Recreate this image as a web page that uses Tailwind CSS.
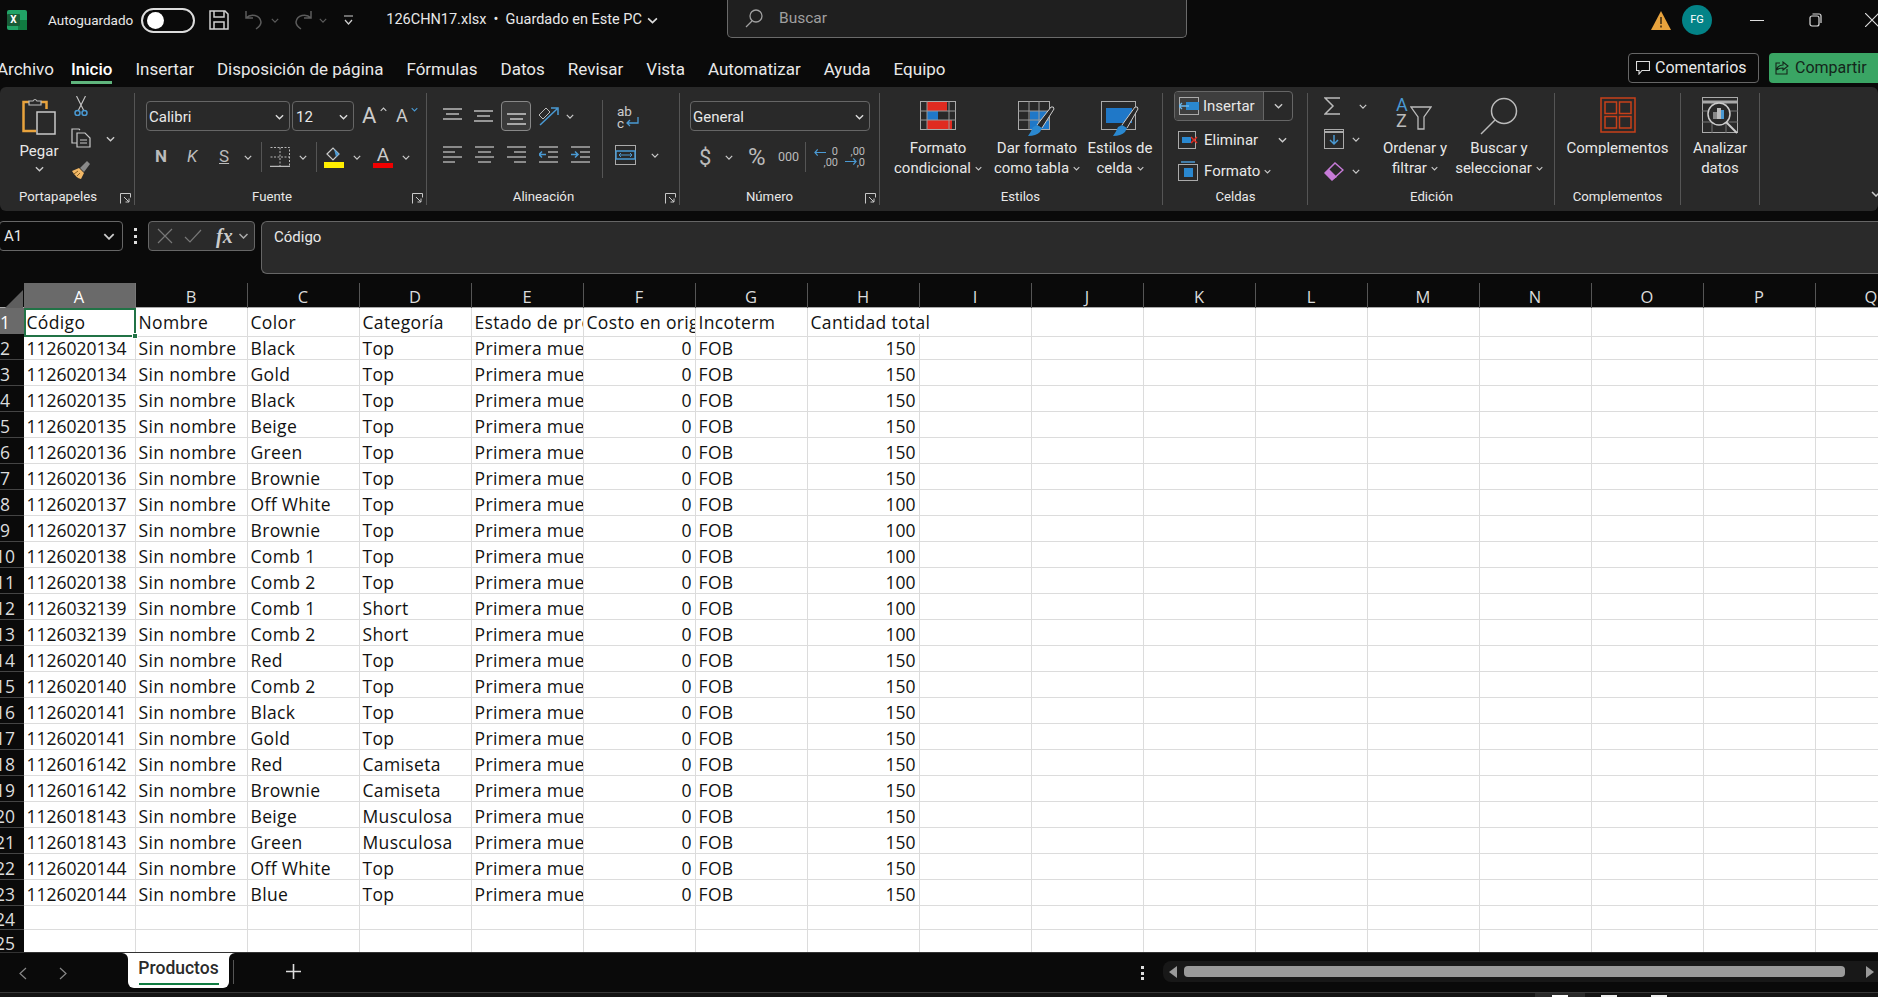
<!DOCTYPE html>
<html lang="en">
<head>
  <meta charset="UTF-8">
  <title>126CHN17.xlsx - Excel</title>
  <script src="https://cdn.jsdelivr.net/npm/@tailwindcss/browser@4"></script>
</head>
<body class="w-[1878px] h-[997px] overflow-hidden bg-[#0a0a0a] text-[#e8e8e8] font-['Roboto',sans-serif] text-[15px] flex flex-col">
  <!-- shared glyphs -->
  <svg class="hidden">
    <symbol id="c" viewBox="0 0 10 6"><path d="M1 1l4 4 4-4" fill="none" stroke="currentColor" stroke-width="1.5"/></symbol>
    <symbol id="launch" viewBox="0 0 11 11"><path d="M.5 10.5V.5h10v4M4 4l5 5M9 5.5V9H5.5" fill="none" stroke="#c8c8c8" stroke-width="1"/></symbol>
  </svg>

  <!-- title bar -->
  <div class="h-[40px] shrink-0 flex items-start">
    <div class="w-[727px] shrink-0 h-full flex items-center">
      <div class="ml-[7px] w-[20px] h-[20px] relative rounded-[2px] bg-[#21a366]">
        <div class="absolute right-0 bottom-0 w-[9px] h-[10px] bg-[#107c41]"></div>
        <div class="absolute left-0 top-[4px] w-[13px] h-[12px] rounded-[1px] bg-[#185c37] text-white text-[10px] leading-[12px] font-bold text-center">X</div>
      </div>
      <span class="ml-[21px] text-[13.500px]">Autoguardado</span>
      <div class="ml-[8px] w-[54px] h-[25px] border-2 border-[#dcdcdc] rounded-full flex items-center pl-[4px]"><div class="w-[17px] h-[17px] rounded-full bg-white"></div></div>
      <svg class="ml-[14px] w-[20px] h-[20px]" viewBox="0 0 20 20" fill="none" stroke="#d0d0d0" stroke-width="1.500"><path d="M1 1h15l3 3v15H1z"/><path d="M5 1v6h10V1M5 19v-7h10v7"/></svg>
      <svg class="ml-[16px] w-[19px] h-[20px]" viewBox="0 0 19 20" fill="none" stroke="#5c5c5c" stroke-width="1.500"><path d="M1 1v7h7M1 8c5-5 14-3 15 4 0 3-2 5-5 7"/></svg>
      <svg class="ml-[7px] w-[8px] h-[5px] text-[#5c5c5c]"><use href="#c"/></svg>
      <svg class="ml-[14px] w-[19px] h-[20px]" viewBox="0 0 19 20" fill="none" stroke="#5c5c5c" stroke-width="1.500"><path d="M18 1v7h-7M18 8C13 3 4 5 3 12c0 3 2 5 5 7"/></svg>
      <svg class="ml-[7px] w-[8px] h-[5px] text-[#5c5c5c]"><use href="#c"/></svg>
      <svg class="ml-[17px] w-[9px] h-[10px]" viewBox="0 0 9 10" fill="none" stroke="#d0d0d0" stroke-width="1.200"><path d="M0 1h9M1 5l3.500 4L8 5"/></svg>
      <span class="ml-[33px] text-[14.500px]">126CHN17.xlsx &nbsp;•&nbsp; Guardado en Este PC</span>
      <svg class="ml-[5px] w-[11px] h-[7px] text-[#ddd]"><use href="#c"/></svg>
    </div>
    <div class="w-[460px] h-[38px] shrink-0 rounded-b-[5px] border border-t-0 border-[#6a6a6a] bg-[#1f1f1f] flex items-center">
      <svg class="ml-[17px] w-[18px] h-[19px]" viewBox="0 0 18 19" fill="none" stroke="#a0a0a0" stroke-width="1.300"><circle cx="11" cy="7" r="6"/><path d="M7 12l-6 6"/></svg>
      <span class="ml-[16px] text-[#a0a0a0] text-[15.500px]">Buscar</span>
    </div>
    <div class="flex-1 h-full flex items-center">
      <svg class="ml-[464px] w-[20px] h-[19px]" viewBox="0 0 20 19"><path d="M10 0l10 19H0z" fill="#e8a33d"/><path d="M10 6v7M10 14.500v2" stroke="#3a2a10" stroke-width="1.500"/></svg>
      <div class="ml-[11px] w-[30px] h-[30px] rounded-full bg-[#038387] flex items-center justify-center text-[11px] text-white">FG</div>
      <div class="ml-[38px] w-[14px] h-px bg-[#ddd]"></div>
      <svg class="ml-[45px] w-[13px] h-[14px]" viewBox="0 0 13 14" fill="none" stroke="#ddd" stroke-width="1.200"><rect x="1" y="3" width="9" height="10" rx="2"/><path d="M3.500 1H10q2 0 2 2v7"/></svg>
      <svg class="ml-[43px] w-[14px] h-[14px]" viewBox="0 0 14 14" stroke="#ddd" stroke-width="1.200"><path d="M0 0l14 14M14 0L0 14"/></svg>
    </div>
  </div>

  <!-- ribbon tabs -->
  <div class="h-[47px] shrink-0 flex items-start">
    <div class="flex gap-[23px] ml-[-3px] pt-[17px] text-[17px] leading-[24px]">
      <span class="mr-[-6px]">Archivo</span>
      <span class="font-medium text-white border-b-[3px] border-[#5fb57d] h-[27px]">Inicio</span>
      <span>Insertar</span>
      <span>Disposición de página</span>
      <span>Fórmulas</span>
      <span>Datos</span>
      <span>Revisar</span>
      <span>Vista</span>
      <span>Automatizar</span>
      <span>Ayuda</span>
      <span>Equipo</span>
    </div>
    <div class="ml-auto flex gap-[10px] pt-[13px]">
      <div class="w-[131px] h-[30px] rounded-[4px] border border-[#666] flex items-center pl-[7px] gap-[5px] text-[16px]">
        <svg class="w-[14px] h-[14px]" viewBox="0 0 14 14" fill="none" stroke="#ddd" stroke-width="1.100"><path d="M.5.500h13v9H6l-3 3.500V9.500H.5z"/></svg>Comentarios
      </div>
      <div class="w-[109px] h-[30px] rounded-l-[4px] bg-[#3aa564] flex items-center pl-[6px] gap-[6px] text-[16px] text-[#14261b]">
        <svg class="w-[14px] h-[14px]" viewBox="0 0 14 14" fill="none" stroke="#14261b" stroke-width="1.100"><path d="M5 2H1v11h11V8M1 9q2-5 7-5V1l5 4-5 4V7q-4 0-7 2"/></svg>Compartir
      </div>
    </div>
  </div>

  <!-- ribbon -->
  <div class="h-[124px] shrink-0 bg-[#292929] rounded-[6px] py-[6px] flex relative text-[#e8e8e8]">

    <!-- Portapapeles -->
    <div class="w-[135px] h-[112px] shrink-0 border-r border-[#555] flex flex-col relative">
      <div class="h-[96px] flex">
        <div class="ml-[19px] w-[40px] flex flex-col items-center pt-[4px]">
          <svg class="w-[34px] h-[38px]" viewBox="0 0 34 38"><path d="M7 5H1.500v29H14" fill="none" stroke="#e8a33d" stroke-width="2.500"/><path d="M19 5h5.500v7" fill="none" stroke="#e8a33d" stroke-width="2.500"/><path d="M7 8V4h4q2-3 4 0h4v4z" fill="#292929" stroke="#bbb" stroke-width="1.200"/><rect x="15" y="15" width="18" height="22" fill="#292929" stroke="#c8c8c8" stroke-width="1.500"/></svg>
          <span class="mt-[8px] leading-[17px]">Pegar</span>
          <svg class="mt-[6px] w-[9px] h-[6px] text-[#ccc]"><use href="#c"/></svg>
        </div>
        <div class="ml-[11px] w-[22px] flex flex-col items-center pt-[3px]">
          <svg class="w-[14px] h-[20px]" viewBox="0 0 14 20" fill="none"><path d="M2.500 0l7 14M11.500 0l-7 14" stroke="#c8c8c8" stroke-width="1.100"/><circle cx="3.500" cy="17" r="2.500" stroke="#4a9ad4" stroke-width="1.500"/><circle cx="10.500" cy="17" r="2.500" stroke="#4a9ad4" stroke-width="1.500"/></svg>
          <svg class="mt-[12px] w-[20px] h-[20px]" viewBox="0 0 20 20" fill="none" stroke="#c8c8c8" stroke-width="1.200"><path d="M6 15H1V1h7l1 1M6 5h8l5 5v9H6z"/><path d="M9 12h7M9 15h7" stroke-width="1"/></svg>
          <svg class="mt-[12px] w-[20px] h-[20px]" viewBox="0 0 20 20"><path d="M1 11l7-3 5 5-3 6q-5-1-9-8z" fill="#f2b866"/><path d="M9 8l7-7 3 3-6 8" fill="#8a8a8a"/><path d="M3 14l4-3M6 16l3-3" stroke="#8a6020" stroke-width="1"/></svg>
        </div>
        <svg class="ml-[14px] mt-[43px] w-[9px] h-[6px] text-[#ccc]"><use href="#c"/></svg>
      </div>
      <div class="h-[16px] mb-[-4px] text-center text-[13.200px] leading-[16px] pr-[18px]">Portapapeles</div>
      <svg class="absolute right-[3px] bottom-[1px] w-[11px] h-[11px]"><use href="#launch"/></svg>
    </div>

    <!-- Fuente -->
    <div class="w-[292px] h-[112px] shrink-0 border-r border-[#555] flex flex-col relative">
      <div class="h-[96px] pt-[8px]">
        <div class="flex items-center pl-[11px]">
          <div class="w-[144px] h-[30px] border border-[#666] rounded-[4px] flex items-center justify-between pl-[2px] pr-[5px] pt-[2px]">Calibri<svg class="w-[9px] h-[6px] text-[#ddd]"><use href="#c"/></svg></div>
          <div class="ml-[2px] w-[62px] h-[30px] border border-[#666] rounded-[4px] flex items-center justify-between pl-[3px] pr-[5px] pt-[2px]">12<svg class="w-[9px] h-[6px] text-[#ddd]"><use href="#c"/></svg></div>
          <span class="ml-[8px] w-[18px] text-[22px] leading-[22px] text-[#ccc]">A</span><svg class="w-[7px] h-[5px] mb-[14px] rotate-180 text-[#ccc]"><use href="#c"/></svg>
          <span class="ml-[9px] w-[15px] text-[18px] leading-[20px] text-[#ccc]">A</span><svg class="w-[7px] h-[5px] mb-[14px] text-[#4a9ad4]"><use href="#c"/></svg>
        </div>
        <div class="flex items-center h-[30px] mt-[11px]">
          <span class="ml-[20px] w-[14px] font-bold text-[#bbb] text-[17px]">N</span>
          <span class="ml-[18px] w-[10px] italic text-[#bbb] text-[17px]">K</span>
          <span class="ml-[22px] w-[10px] underline text-[#bbb] text-[17px]">S</span>
          <svg class="ml-[15px] w-[8px] h-[5px] text-[#ccc]"><use href="#c"/></svg>
          <div class="ml-[9px] w-px h-[30px] bg-[#555]"></div>
          <svg class="ml-[8px] w-[20px] h-[20px]" viewBox="0 0 20 20" fill="none" stroke="#b8b8b8"><path d="M.5.500h19v19H.5M10 .5v19M.5 10h19" stroke-dasharray="2 1.500"/><path d="M0 19.500h20" stroke-width="1.500"/></svg>
          <svg class="ml-[9px] w-[8px] h-[5px] text-[#ccc]"><use href="#c"/></svg>
          <div class="ml-[9px] w-px h-[30px] bg-[#555]"></div>
          <svg class="ml-[7px] w-[20px] h-[22px]" viewBox="0 0 20 22"><path d="M3 8l6-6 6 6-6 6z" fill="none" stroke="#ccc" stroke-width="1.200"/><path d="M10 3l5 5-3 3z" fill="#4a9ad4"/><rect y="16" width="20" height="6" fill="#ffee00"/></svg>
          <svg class="ml-[9px] w-[8px] h-[5px] text-[#ccc]"><use href="#c"/></svg>
          <div class="ml-[12px] w-[20px] flex flex-col items-center"><span class="text-[19px] leading-[17px] text-[#ccc]">A</span><div class="w-[20px] h-[5px] bg-[#f00000]"></div></div>
          <svg class="ml-[9px] w-[8px] h-[5px] text-[#ccc]"><use href="#c"/></svg>
        </div>
      </div>
      <div class="h-[16px] mb-[-4px] text-center text-[13.200px] leading-[16px] pr-[17px]">Fuente</div>
      <svg class="absolute right-[3px] bottom-[1px] w-[11px] h-[11px]"><use href="#launch"/></svg>
    </div>

    <!-- Alineación -->
    <div class="w-[253px] h-[112px] shrink-0 border-r border-[#555] flex flex-col relative">
      <div class="h-[96px] flex">
        <div class="w-[176px] border-r border-[#555] h-[78px] mt-[7px] pl-[16px]">
          <div class="flex items-center h-[30px] mt-[1px]">
            <svg class="w-[19px] h-[16px]" viewBox="0 0 19 16" stroke="#bbb" stroke-width="1.500"><path d="M0 1h19M3 6h13M0 11h19"/></svg>
            <svg class="ml-[12px] w-[19px] h-[16px]" viewBox="0 0 19 16" stroke="#bbb" stroke-width="1.500"><path d="M0 3h19M3 8h13M0 13h19"/></svg>
            <div class="ml-[8px] w-[30px] h-[30px] border border-[#888] bg-[#3a3a3a] rounded-[4px] flex items-center justify-center"><svg class="w-[19px] h-[16px] mt-[4px]" viewBox="0 0 19 16" stroke="#ccc" stroke-width="1.500"><path d="M0 4h19M3 9h13M0 14h19"/></svg></div>
            <svg class="ml-[6px] w-[22px] h-[20px]" viewBox="0 0 22 20" fill="none"><path d="M2 9l7-7 4 4-7 7z" stroke="#bbb" stroke-width="1"/><path d="M3 19L20 3M14 2h7v7" stroke="#4a9ad4" stroke-width="1.500"/></svg>
            <svg class="ml-[7px] w-[8px] h-[5px] text-[#ccc]"><use href="#c"/></svg>
          </div>
          <div class="flex items-center h-[30px] mt-[9px] gap-[13px]">
            <svg class="w-[19px] h-[18px]" viewBox="0 0 19 18" stroke="#aaa" stroke-width="1.500"><path d="M0 1h19M0 6h12M0 11h19M0 16h12"/></svg>
            <svg class="w-[19px] h-[18px]" viewBox="0 0 19 18" stroke="#aaa" stroke-width="1.500"><path d="M0 1h19M3 6h13M0 11h19M3 16h13"/></svg>
            <svg class="w-[19px] h-[18px]" viewBox="0 0 19 18" stroke="#aaa" stroke-width="1.500"><path d="M0 1h19M7 6h12M0 11h19M7 16h12"/></svg>
            <svg class="w-[19px] h-[18px]" viewBox="0 0 19 18" fill="none" stroke="#aaa" stroke-width="1.500"><path d="M0 1h19M9 6h10M9 11h10M0 16h19"/><path d="M7 8.500H0M3 5.500l-3 3 3 3" stroke="#4a9ad4"/></svg>
            <svg class="w-[19px] h-[18px]" viewBox="0 0 19 18" fill="none" stroke="#aaa" stroke-width="1.500"><path d="M0 1h19M9 6h10M9 11h10M0 16h19"/><path d="M0 8.500h7M4 5.500l3 3-3 3" stroke="#4a9ad4"/></svg>
          </div>
        </div>
        <div class="pl-[14px] pt-[12px]">
          <div class="relative w-[24px] h-[26px] text-[13.500px] leading-[12px] text-[#ccc]">ab<br>c<svg class="absolute left-[9px] top-[12px] w-[13px] h-[11px]" viewBox="0 0 13 11" fill="none" stroke="#4a9ad4" stroke-width="1.300"><path d="M12 0v6H1M4 3L1 6l3 3"/></svg></div>
          <div class="flex items-center mt-[9px] h-[30px] ml-[-2px]">
            <svg class="w-[21px] h-[20px]" viewBox="0 0 21 20" fill="none"><rect x=".5" y=".5" width="20" height="19" stroke="#aaa"/><rect x="1" y="6" width="19" height="8" stroke="#4a9ad4" stroke-width="1.500"/><path d="M4 10h13M6 8l-2 2 2 2M15 8l2 2-2 2" stroke="#4a9ad4"/></svg>
            <svg class="ml-[15px] w-[8px] h-[5px] text-[#ccc]"><use href="#c"/></svg>
          </div>
        </div>
      </div>
      <div class="h-[16px] mb-[-4px] text-center text-[13.200px] leading-[16px] pr-[19px]">Alineación</div>
      <svg class="absolute right-[3px] bottom-[1px] w-[11px] h-[11px]"><use href="#launch"/></svg>
    </div>

    <!-- Número -->
    <div class="w-[200px] h-[112px] shrink-0 border-r border-[#555] flex flex-col relative">
      <div class="h-[96px] pt-[8px]">
        <div class="ml-[10px] w-[180px] h-[30px] border border-[#666] rounded-[4px] flex items-center justify-between pl-[2px] pr-[5px] pt-[2px]">General<svg class="w-[9px] h-[6px] text-[#ddd]"><use href="#c"/></svg></div>
        <div class="flex items-center h-[30px] mt-[11px]">
          <span class="ml-[19px] w-[12px] text-[22px] text-[#bbb]">$</span>
          <svg class="ml-[14px] w-[8px] h-[5px] text-[#ccc]"><use href="#c"/></svg>
          <span class="ml-[15px] w-[22px] text-[24px] text-[#bbb]">%</span>
          <span class="ml-[8px] w-[20px] text-[12.500px] text-[#bbb]">000</span>
          <div class="ml-[7px] w-px h-[30px] bg-[#555]"></div>
          <div class="ml-[6px] w-[26px] h-[24px] relative text-[11px] leading-[11px] text-[#bbb] text-right pt-[1px]">0<br>,00<svg class="absolute left-[2px] top-[3px] w-[12px] h-[9px]" viewBox="0 0 13 9" fill="none" stroke="#4a9ad4" stroke-width="1.300"><path d="M13 4.500H1M4 1L1 4.500 4 8"/></svg></div>
          <div class="ml-[7px] w-[20px] h-[24px] relative text-[11px] leading-[11px] text-[#bbb] text-right pt-[1px]">,00<br>,0<svg class="absolute left-0 top-[12px] w-[12px] h-[9px]" viewBox="0 0 13 9" fill="none" stroke="#4a9ad4" stroke-width="1.300"><path d="M0 4.500h12M9 1l3 3.500L9 8"/></svg></div>
        </div>
      </div>
      <div class="h-[16px] mb-[-4px] text-center text-[13.200px] leading-[16px] pr-[20px]">Número</div>
      <svg class="absolute right-[3px] bottom-[1px] w-[11px] h-[11px]"><use href="#launch"/></svg>
    </div>

    <!-- Estilos -->
    <div class="w-[283px] h-[112px] shrink-0 border-r border-[#555] flex flex-col">
      <div class="h-[96px] flex pt-[8px] leading-[20px] text-center">
        <div class="ml-[-2px] w-[120px] shrink-0 flex flex-col items-center">
          <svg class="w-[36px] h-[35px]" viewBox="0 0 36 35" fill="none"><path d="M7 1h20v9H7zM7 19h25v9H7z" fill="#e02b20"/><path d="M7 10h11v9H7z" fill="#1f78c8"/><rect x=".5" y=".5" width="35" height="28" stroke="#aaa"/><path d="M7 0v29M29 0v29M0 10h36M0 19h36" stroke="#999"/></svg>
          <span class="mt-[2px]">Formato</span>
          <span class="whitespace-nowrap flex items-center gap-[4px]">condicional<svg class="w-[7px] h-[5px] text-[#ccc]"><use href="#c"/></svg></span>
        </div>
        <div class="ml-[-11px] w-[100px] shrink-0 flex flex-col items-center">
          <svg class="w-[38px] h-[35px]" viewBox="0 0 38 35" fill="none"><path d="M12 10h20v18H12z" fill="#1f78c8"/><rect x=".5" y=".5" width="31" height="28" stroke="#aaa"/><path d="M11 0v29M21 0v29M0 10h32M0 19h32" stroke="#999"/><path d="M19 24L33 6q3-1 3 2L24 27" fill="#292929" stroke="#ccc"/><path d="M10 35q8 0 12-4l2-4-5-3-4 2q-2 5-5 9z" fill="#2a88d0"/></svg>
          <span class="mt-[2px] whitespace-nowrap">Dar formato</span>
          <span class="whitespace-nowrap flex items-center gap-[4px]">como tabla<svg class="w-[7px] h-[5px] text-[#ccc]"><use href="#c"/></svg></span>
        </div>
        <div class="ml-[-17px] w-[100px] shrink-0 flex flex-col items-center">
          <svg class="w-[38px] h-[35px]" viewBox="0 0 38 35" fill="none"><rect x=".5" y=".5" width="34" height="28" stroke="#aaa"/><path d="M5 7h26v15H5z" fill="#1f78c8"/><path d="M21 24L34 6q3-1 3 2L26 27" fill="#292929" stroke="#ccc"/><path d="M12 35q8 0 12-4l2-4-5-3-4 2q-2 5-5 9z" fill="#2a88d0"/></svg>
          <span class="mt-[2px] whitespace-nowrap">Estilos de</span>
          <span class="whitespace-nowrap flex items-center gap-[4px]">celda<svg class="w-[7px] h-[5px] text-[#ccc]"><use href="#c"/></svg></span>
        </div>
      </div>
      <div class="h-[16px] mb-[-5px] text-center text-[13.200px] leading-[16px] pr-[1px]">Estilos</div>
    </div>

    <!-- Celdas -->
    <div class="w-[145px] h-[112px] shrink-0 border-r border-[#555] flex flex-col">
      <div class="h-[96px] pl-[11px]">
        <div class="w-[119px] h-[30px] mt-[-2px] border border-[#666] rounded-[4px] flex items-center overflow-hidden">
          <div class="w-[89px] h-full bg-[#3e3e3e] flex items-center pl-[4px] gap-[4px] border-r border-[#666]">
            <svg class="w-[20px] h-[18px]" viewBox="0 0 20 18" fill="none"><rect x=".5" y=".5" width="19" height="17" stroke="#aaa"/><path d="M7 5h13v8H7z" fill="#2a88d0"/><path d="M10 9H0M3 6L0 9l3 3" stroke="#6ab8ee" stroke-width="1.300"/></svg>Insertar
          </div>
          <svg class="ml-[10px] w-[9px] h-[6px] text-[#ccc]"><use href="#c"/></svg>
        </div>
        <div class="h-[32px] flex items-center pl-[4px] gap-[6px] mt-[3px]">
          <svg class="w-[20px] h-[18px]" viewBox="0 0 20 18" fill="none"><rect x=".5" y=".5" width="17" height="17" stroke="#aaa"/><path d="M4 6h9v6H4z" fill="#2a88d0"/><path d="M13 6l6 6M19 6l-6 6" stroke="#e02b20" stroke-width="1.500"/></svg>Eliminar
          <svg class="ml-[14px] w-[9px] h-[6px] text-[#ccc]"><use href="#c"/></svg>
        </div>
        <div class="h-[32px] mt-[-1px] flex items-center pl-[4px] gap-[6px]">
          <svg class="w-[20px] h-[20px]" viewBox="0 0 20 20" fill="none"><rect x=".5" y="3.500" width="19" height="16" stroke="#aaa"/><path d="M6 7h9v9H6z" fill="#2a88d0"/><path d="M3 1h14" stroke="#4a9ad4" stroke-width="1.500"/></svg><span class="flex items-center gap-[4px]">Formato<svg class="w-[7px] h-[5px] text-[#ccc]"><use href="#c"/></svg></span>
        </div>
      </div>
      <div class="h-[16px] mb-[-5px] text-center text-[13.200px] leading-[16px] pl-[1px]">Celdas</div>
    </div>

    <!-- Edición -->
    <div class="w-[247px] h-[112px] shrink-0 border-r border-[#555] flex flex-col">
      <div class="h-[96px] flex">
        <div class="w-[65px] pl-[16px] pt-[4px] shrink-0">
          <div class="h-[18px] flex items-center"><svg class="w-[17px] h-[18px]" viewBox="0 0 17 18" fill="none" stroke="#bbb" stroke-width="1.500"><path d="M16 1H1l8 8-8 8h15"/></svg><svg class="ml-[18px] w-[8px] h-[5px] text-[#ccc]"><use href="#c"/></svg></div>
          <div class="h-[20px] mt-[14px] flex items-center"><svg class="w-[20px] h-[20px]" viewBox="0 0 20 20" fill="none"><rect x=".5" y=".5" width="19" height="19" stroke="#aaa"/><path d="M0 3h20" stroke="#aaa" stroke-width="2"/><path d="M10 6v9M6 11l4 4 4-4" stroke="#4a9ad4" stroke-width="1.500"/></svg><svg class="ml-[8px] w-[8px] h-[5px] text-[#ccc]"><use href="#c"/></svg></div>
          <div class="h-[20px] mt-[12px] flex items-center"><svg class="w-[20px] h-[20px]" viewBox="0 0 20 20" fill="none"><path d="M1 12L11 2l8 7L8 19z" stroke="#c77bd8" stroke-width="1.500"/><path d="M1 12l4-4 8 8-5 3z" fill="#c77bd8"/></svg><svg class="ml-[8px] w-[8px] h-[5px] text-[#ccc]"><use href="#c"/></svg></div>
        </div>
        <div class="w-[84px] shrink-0 flex flex-col items-center pt-[4px] leading-[20px]">
          <div class="relative w-[36px] h-[37px] ml-[-2px] text-[18px] leading-[16px]"><span class="text-[#4a9ad4]">A</span><br><span class="text-[#bbb]">Z</span><svg class="absolute left-[14px] top-[9px] w-[22px] h-[24px]" viewBox="0 0 22 24" fill="none" stroke="#bbb" stroke-width="1.300"><path d="M1 1h20l-7 10v12h-6V11z"/></svg></div>
          <span class="mt-[4px] whitespace-nowrap">Ordenar y</span>
          <span class="whitespace-nowrap flex items-center gap-[4px]">filtrar<svg class="w-[7px] h-[5px] text-[#ccc]"><use href="#c"/></svg></span>
        </div>
        <div class="w-[84px] shrink-0 flex flex-col items-center pt-[4px] leading-[20px]">
          <svg class="w-[38px] h-[38px]" viewBox="0 0 38 38" fill="none" stroke="#bbb" stroke-width="1.500"><circle cx="24" cy="14" r="12.500"/><path d="M15 23L1 37"/></svg>
          <span class="mt-[3px] whitespace-nowrap">Buscar y</span>
          <span class="whitespace-nowrap flex items-center gap-[4px]">seleccionar<svg class="w-[7px] h-[5px] text-[#ccc]"><use href="#c"/></svg></span>
        </div>
      </div>
      <div class="h-[16px] mb-[-5px] text-center text-[13.200px] leading-[16px] pl-[1px]">Edición</div>
    </div>

    <!-- Complementos -->
    <div class="w-[126px] h-[112px] shrink-0 border-r border-[#555] flex flex-col">
      <div class="h-[96px] flex flex-col items-center pt-[4px]">
        <svg class="w-[36px] h-[36px]" viewBox="0 0 36 36" fill="none" stroke="#c8401a" stroke-width="1.500"><rect x="1" y="1" width="34" height="34"/><rect x="5" y="5" width="11.500" height="11.500"/><rect x="19.500" y="5" width="11.500" height="11.500"/><rect x="5" y="19.500" width="11.500" height="11.500"/><rect x="19.500" y="19.500" width="11.500" height="11.500"/></svg>
        <span class="mt-[5px] leading-[20px]">Complementos</span>
      </div>
      <div class="h-[16px] mb-[-5px] text-center text-[13.200px] leading-[16px]">Complementos</div>
    </div>

    <!-- Analizar datos -->
    <div class="w-[79px] h-[112px] shrink-0 border-r border-[#555] flex flex-col items-center pt-[4px] leading-[20px]">
      <svg class="w-[36px] h-[37px]" viewBox="0 0 36 37" fill="none"><rect x=".5" y=".5" width="35" height="35" stroke="#aaa"/><path d="M0 5h36" stroke="#aaa" stroke-width="3"/><path d="M0 14h36M0 25h36M10 6v30M24 6v30" stroke="#777"/><circle cx="17" cy="17" r="11" fill="#292929" stroke="#ccc" stroke-width="1.500"/><path d="M24 25l11 11" stroke="#ccc" stroke-width="2"/><path d="M11 15h4v7h-4z" fill="#888"/><path d="M15 11h4v11h-4z" fill="#bbb"/><path d="M19 13h3v9h-3z" fill="#4a9ad4"/></svg>
      <span class="mt-[4px]">Analizar</span>
      <span>datos</span>
    </div>
    <svg class="ml-auto mt-[98px] mr-[-3px] w-[10px] h-[6px] text-[#ccc]"><use href="#c"/></svg>
  </div>

  <!-- formula bar -->
  <div class="h-[72px] shrink-0 pt-[10px] flex items-start">
    <div class="w-[124px] h-[30px] ml-[-1px] border border-[#666] rounded-[4px] flex items-center justify-between pl-[4px] pr-[7px]">A1<svg class="w-[12px] h-[7px] text-[#ccc]"><use href="#c"/></svg></div>
    <div class="ml-[11px] w-[3px] h-[16px] mt-[7px] flex flex-col justify-between"><i class="h-[3px] bg-[#ddd]"></i><i class="h-[3px] bg-[#ddd]"></i><i class="h-[3px] bg-[#ddd]"></i></div>
    <div class="ml-[11px] w-[107px] h-[30px] border border-[#666] rounded-[4px] bg-[#2a2a2a] flex items-center pl-[8px]">
      <svg class="w-[16px] h-[16px]" viewBox="0 0 16 16" stroke="#777" stroke-width="1.200"><path d="M1 1l14 14M15 1L1 15"/></svg>
      <svg class="ml-[11px] w-[18px] h-[14px]" viewBox="0 0 18 14" fill="none" stroke="#777" stroke-width="1.200"><path d="M1 8l5 5L17 1"/></svg>
      <span class="ml-[14px] font-['Liberation_Serif',serif] italic font-bold text-[20px] leading-[20px] text-[#ccc]">fx</span>
      <svg class="ml-[5px] w-[11px] h-[6px] text-[#aaa]"><use href="#c"/></svg>
    </div>
    <div class="ml-[6px] flex-1 h-[53px] border border-[#666] border-r-0 rounded-l-[6px] bg-[#2a2a2a] pl-[12px] pt-[5px] leading-[20px]">Código</div>
  </div>

  <!-- column headers -->
  <div id="colHead" class="h-[25px] shrink-0 grid grid-cols-[23.5px_repeat(17,112px)] border-b border-[#aaa] font-['Open_Sans',sans-serif] text-[16.500px] text-[#dcdcdc]">
    <div class="flex items-end justify-end pr-[1px] pb-[1px]"><svg class="w-[19px] h-[19px]" viewBox="0 0 19 19"><path d="M19 0v19H0z" fill="#5e5e5e"/></svg></div>
  </div>

  <!-- cells -->
  <div id="sheet" class="h-[644px] shrink-0 overflow-hidden bg-white text-[#111] font-['Open_Sans',sans-serif] text-[17.500px]"></div>

  <!-- sheet tabs -->
  <div class="h-[40px] shrink-0 border-t border-[#333] flex items-start relative">
    <svg class="ml-[19px] mt-[14px] w-[8px] h-[13px]" viewBox="0 0 8 13" fill="none" stroke="#888" stroke-width="1.200"><path d="M7 1L1 6.500 7 12"/></svg>
    <svg class="ml-[32px] mt-[14px] w-[8px] h-[13px]" viewBox="0 0 8 13" fill="none" stroke="#888" stroke-width="1.200"><path d="M1 1l6 5.500L1 12"/></svg>
    <div class="relative ml-[61px] w-[101px] h-[35px] bg-white rounded-b-[6px] flex flex-col items-center text-[#2a2a2a] font-medium text-[17.500px]">
      <div class="absolute left-[-6px] top-0 w-[6px] h-[6px] bg-white"><div class="w-full h-full bg-[#0a0a0a] rounded-tr-[6px]"></div></div>
      <div class="absolute right-[-6px] top-0 w-[6px] h-[6px] bg-white"><div class="w-full h-full bg-[#0a0a0a] rounded-tl-[6px]"></div></div>
      <span class="leading-[30px]">Productos</span>
      <div class="w-[80px] h-[2px] bg-[#107c41]"></div>
    </div>
    <div class="ml-[4px] mt-[7px] w-px h-[24px] bg-[#555]"></div>
    <svg class="ml-[52px] mt-[11px] w-[15px] h-[15px]" viewBox="0 0 15 15" stroke="#ddd" stroke-width="1.600"><path d="M7.500 0v15M0 7.500h15"/></svg>
    <div class="ml-[840px] mt-[13px] w-[3px] h-[14px] flex flex-col justify-between"><i class="h-[3px] bg-[#ddd]"></i><i class="h-[3px] bg-[#ddd]"></i><i class="h-[3px] bg-[#ddd]"></i></div>
    <div class="ml-[19px] mt-[8px] flex-1 h-[21px] bg-[#181818] rounded-l-[8px] flex items-center pl-[6px]">
      <svg class="w-[8px] h-[12px]" viewBox="0 0 8 12"><path d="M8 0v12L0 6z" fill="#9a9a9a"/></svg>
      <div class="ml-[7px] w-[661px] h-[11px] bg-[#9a9a9a] rounded-[4px]"></div>
      <svg class="ml-[21px] w-[8px] h-[12px]" viewBox="0 0 8 12"><path d="M0 0v12l8-6z" fill="#9a9a9a"/></svg>
    </div>
  </div>

  <!-- status bar, only its top edge is in frame -->
  <div class="h-[5px] shrink-0 border-t border-[#3a3a3a] bg-[#141414] flex">
    <div class="ml-[1535px] w-[50px] bg-[#2a2a2a] flex justify-center"><div class="w-[16px] h-[2px] mt-[2px] bg-white"></div></div>
    <div class="ml-[16px] w-[16px] h-[2px] mt-[2px] bg-[#eee]"></div>
    <div class="ml-[34px] w-[16px] h-[2px] mt-[2px] bg-[#eee]"></div>
  </div>

  <script>
    const letters = 'ABCDEFGHIJKLMNOPQ'.split('');
    const head = document.getElementById('colHead');
    letters.forEach((l, i) => {
      const d = document.createElement('div');
      d.className = i === 0
        ? 'bg-[#6a6a6a] text-white text-center leading-[27px] border-r border-[#777]'
        : 'text-center leading-[27px] border-r border-[#555]';
      d.textContent = l;
      head.appendChild(d);
    });

    const rows = [
      ['1126020134','Black','Top',150], ['1126020134','Gold','Top',150],
      ['1126020135','Black','Top',150], ['1126020135','Beige','Top',150],
      ['1126020136','Green','Top',150], ['1126020136','Brownie','Top',150],
      ['1126020137','Off White','Top',100], ['1126020137','Brownie','Top',100],
      ['1126020138','Comb 1','Top',100], ['1126020138','Comb 2','Top',100],
      ['1126032139','Comb 1','Short',100], ['1126032139','Comb 2','Short',100],
      ['1126020140','Red','Top',150], ['1126020140','Comb 2','Top',150],
      ['1126020141','Black','Top',150], ['1126020141','Gold','Top',150],
      ['1126016142','Red','Camiseta',150], ['1126016142','Brownie','Camiseta',150],
      ['1126018143','Beige','Musculosa',150], ['1126018143','Green','Musculosa',150],
      ['1126020144','Off White','Top',150], ['1126020144','Blue','Top',150],
    ];

    // text cells get a little tracking, Open Sans letters run narrower than the digits
    const cell = (text, cls) => `<div class="border-r border-b border-[#dcdcdc] overflow-hidden whitespace-nowrap px-[3px] ${cls || ''}">${text}</div>`;
    const txt = text => cell(text, 'tracking-[0.35px]');
    const rowHead = (n, on) => `<div class="${on ? 'bg-[#6a6a6a] text-white' : 'bg-[#0a0a0a] text-[#dcdcdc]'} border-b border-[#444] overflow-hidden"><div class="w-[10px] flex justify-center">${n}</div></div>`;
    const blanks = n => Array(n).fill(cell('')).join('');

    let html = `<div class="grid grid-cols-[23.5px_repeat(17,112px)] h-[26px] leading-[28px]">${rowHead(1, true)}
      <div class="relative border-2 border-[#217346] px-[1px] leading-[24px] z-10 tracking-[0.35px]">Código<div class="absolute right-[-4px] bottom-[-4px] w-[6px] h-[6px] bg-[#217346] border border-white"></div></div>
      ${txt('Nombre')}${txt('Color')}${txt('Categoría')}${txt('Estado de producto')}${txt('Costo en origen')}${txt('Incoterm')}
      <div class="border-b border-[#dcdcdc] whitespace-nowrap px-[3px] tracking-[0.35px]">Cantidad total</div>${blanks(9)}</div>`;

    rows.forEach((r, i) => {
      html += `<div class="grid grid-cols-[23.5px_repeat(17,112px)] h-[26px] leading-[28px]">${rowHead(i + 2)}
        ${cell(r[0])}${txt('Sin nombre')}${txt(r[1])}${txt(r[2])}${txt('Primera muestra')}${cell('0', 'text-right')}${txt('FOB')}${cell(r[3], 'text-right')}${blanks(9)}</div>`;
    });
    [24, 25].forEach(n => {
      html += `<div class="grid grid-cols-[23.5px_repeat(17,112px)] h-[24px] leading-[26px]">${rowHead(n)}${blanks(17)}</div>`;
    });
    document.getElementById('sheet').innerHTML = html;
  </script>
</body>
</html>
